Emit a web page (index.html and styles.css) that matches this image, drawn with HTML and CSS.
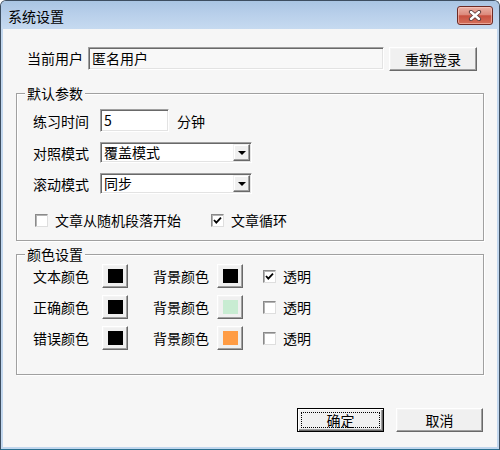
FILE: index.html
```html
<!DOCTYPE html>
<html lang="zh-CN">
<head>
<meta charset="utf-8">
<title>系统设置</title>
<link rel="stylesheet" href="styles.css">
</head>
<body>
<div class="window">
  <div class="titlebar">
    <span class="title">系统设置</span>
    <span class="close">
      <svg width="14" height="11" viewBox="0 0 14 11">
        <path d="M3 2 L11 9 M11 2 L3 9" stroke="#5a3a3a" stroke-width="4.2" stroke-linecap="round"/>
        <path d="M3 2 L11 9 M11 2 L3 9" stroke="#ffffff" stroke-width="2.4" stroke-linecap="round"/>
      </svg>
    </span>
  </div>
  <div class="client">
    <div class="user-row">
      <span class="user-label">当前用户</span>
      <div class="field field-user">匿名用户</div>
      <div class="btn btn-relogin">重新登录</div>
    </div>

    <div class="group group-params">
      <span class="legend">默认参数</span>
      <div class="prow prow-first">
        <span class="plabel">练习时间</span>
        <div class="field field-time">5</div>
        <span class="unit">分钟</span>
      </div>
      <div class="prow">
        <span class="plabel">对照模式</span>
        <div class="combo">
          <span class="combo-text">覆盖模式</span>
          <span class="combo-btn"><span class="tri"></span></span>
        </div>
      </div>
      <div class="prow">
        <span class="plabel">滚动模式</span>
        <div class="combo">
          <span class="combo-text">同步</span>
          <span class="combo-btn"><span class="tri"></span></span>
        </div>
      </div>
      <div class="checks">
        <label class="check check-wide"><span class="box"></span><span class="check-text">文章从随机段落开始</span></label>
        <label class="check"><span class="box"><svg width="11" height="11" viewBox="0 0 11 11"><polyline points="2,5 4.3,7.6 9,2.6" fill="none" stroke="#000" stroke-width="1.8"/></svg></span><span class="check-text">文章循环</span></label>
      </div>
    </div>

    <div class="group group-colors">
      <span class="legend">颜色设置</span>
      <div class="crow">
        <span class="clabel">文本颜色</span>
        <div class="btn cbtn"><span class="swatch swatch-black"></span></div>
        <span class="clabel2">背景颜色</span>
        <div class="btn cbtn"><span class="swatch swatch-black"></span></div>
        <label class="check ccheck"><span class="box"><svg width="11" height="11" viewBox="0 0 11 11"><polyline points="2,5 4.3,7.6 9,2.6" fill="none" stroke="#000" stroke-width="1.8"/></svg></span><span class="check-text">透明</span></label>
      </div>
      <div class="crow">
        <span class="clabel">正确颜色</span>
        <div class="btn cbtn"><span class="swatch swatch-black"></span></div>
        <span class="clabel2">背景颜色</span>
        <div class="btn cbtn"><span class="swatch swatch-green"></span></div>
        <label class="check ccheck"><span class="box"></span><span class="check-text">透明</span></label>
      </div>
      <div class="crow">
        <span class="clabel">错误颜色</span>
        <div class="btn cbtn"><span class="swatch swatch-black"></span></div>
        <span class="clabel2">背景颜色</span>
        <div class="btn cbtn"><span class="swatch swatch-orange"></span></div>
        <label class="check ccheck"><span class="box"></span><span class="check-text">透明</span></label>
      </div>
    </div>

    <div class="actions">
      <div class="btn btn-action btn-default"><span class="focus">确定</span></div>
      <div class="btn btn-action">取消</div>
    </div>
  </div>
</div>
</body>
</html>
```

FILE: styles.css
```css
* {
  box-sizing: border-box;
}

html, body {
  margin: 0;
  padding: 0;
  background: #ffffff;
}

body {
  font-family: "Noto Sans CJK SC", "Noto Sans", sans-serif;
  font-size: 14px;
  color: #000;
}

.window {
  width: 500px;
  height: 450px;
  border: 1px solid #3d4e60;
  border-bottom-color: #2a7090;
  border-radius: 6px 6px 0 0;
  background: #c2d7ee;
  display: flex;
  flex-direction: column;
  overflow: hidden;
}

.titlebar {
  height: 28px;
  flex: none;
  display: flex;
  justify-content: space-between;
  align-items: flex-start;
  padding: 0 6px 0 7px;
  background: linear-gradient(180deg, #a9c5e3 0%, #b8cfea 45%, #c6daf0 100%);
}

.title {
  margin-top: 6px;
  line-height: 18px;
  font-size: 14px;
  color: #000;
}

.close {
  margin-top: 5px;
  width: 36px;
  height: 19px;
  border: 1px solid #6d2a24;
  border-radius: 3px;
  background: linear-gradient(180deg, #eab1a6 0%, #dc8a7c 45%, #c8503f 52%, #d4705c 100%);
  box-shadow: inset 0 0 0 1px rgba(255, 210, 200, 0.55);
  display: flex;
  align-items: center;
  justify-content: center;
}

.close svg {
  display: block;
}

.client {
  flex: 1;
  margin: 0 2px 2px 2px;
  background: #f6f6f6;
  padding: 18px 13px 0 13px;
}

/* user row */
.user-row {
  display: flex;
  align-items: flex-start;
  height: 24px;
}

.user-label {
  width: 61px;
  margin-left: 11px;
  line-height: 23px;
}

.field {
  height: 23px;
  border: 1px solid;
  border-color: #a0a0a0 #ffffff #ffffff #a0a0a0;
  box-shadow: inset 1px 1px 0 #696969, inset -1px -1px 0 #e3e3e3;
  background: #ffffff;
  line-height: 21px;
  padding-left: 3px;
}

.field-user {
  width: 296px;
  background: #f8f8f8;
}

.btn {
  border: 1px solid;
  border-color: #ffffff #696969 #696969 #ffffff;
  box-shadow: inset -1px -1px 0 #a0a0a0, inset 1px 1px 0 #f4f4f4;
  background: #f0f0f0;
  display: flex;
  align-items: center;
  justify-content: center;
}

.btn-relogin {
  width: 88px;
  height: 24px;
  margin-left: 5px;
}

/* group boxes */
.group {
  position: relative;
  border: 1px solid #a0a0a0;
  box-shadow: inset 1px 1px 0 #ffffff, 1px 1px 0 #ffffff;
}

.legend {
  position: absolute;
  top: -9px;
  left: 8px;
  padding: 0 2px 0 2px;
  line-height: 16px;
  background: #f6f6f6;
}

.group-params {
  margin-top: 22px;
  height: 148px;
  padding: 15px 0 0 16px;
}

.prow {
  display: flex;
  align-items: center;
  margin-top: 10px;
  height: 21px;
}

.prow-first {
  margin-top: 0;
  height: 23px;
}

.plabel {
  width: 67px;
}

.field-time {
  width: 69px;
}

.unit {
  margin-left: 8px;
}

.combo {
  width: 152px;
  height: 21px;
  border: 1px solid;
  border-color: #a0a0a0 #ffffff #ffffff #a0a0a0;
  box-shadow: inset 1px 1px 0 #696969, inset -1px -1px 0 #e3e3e3;
  background: #ffffff;
  display: flex;
  align-items: center;
  padding: 1px;
}

.combo-text {
  flex: 1;
  padding-left: 2px;
  line-height: 17px;
}

.combo-btn {
  width: 17px;
  height: 17px;
  border: 1px solid;
  border-color: #f0f0f0 #696969 #696969 #f0f0f0;
  box-shadow: inset -1px -1px 0 #a0a0a0, inset 1px 1px 0 #ffffff;
  background: #f0f0f0;
  display: flex;
  align-items: center;
  justify-content: center;
}

.tri {
  width: 0;
  height: 0;
  border-left: 4px solid transparent;
  border-right: 4px solid transparent;
  border-top: 4px solid #000;
  margin-top: 1px;
}

.checks {
  display: flex;
  align-items: center;
  margin-top: 19px;
  margin-left: 2px;
  height: 14px;
}

.check {
  display: flex;
  align-items: center;
}

.check-wide {
  width: 176px;
}

.box {
  width: 13px;
  height: 13px;
  border: 1px solid;
  border-color: #8a8a8a #dedede #dedede #8a8a8a;
  box-shadow: inset 1px 1px 0 #b4b4b4;
  background: #ffffff;
  display: flex;
  align-items: center;
  justify-content: center;
  flex: none;
}

.box svg {
  display: block;
}

.check-text {
  margin-left: 7px;
}

/* colour group */
.group-colors {
  margin-top: 13px;
  height: 121px;
  padding: 9px 0 0 16px;
}

.crow {
  display: flex;
  align-items: center;
  height: 24px;
  margin-bottom: 7px;
}

.clabel {
  width: 69px;
}

.clabel2 {
  width: 64px;
  margin-left: 25px;
}

.cbtn {
  width: 26px;
  height: 24px;
}

.swatch {
  width: 15px;
  height: 14px;
  display: block;
}

.swatch-black {
  background: #000000;
}

.swatch-green {
  background: #c8ecd2;
}

.swatch-orange {
  background: #ff9c44;
}

.ccheck {
  margin-left: 20px;
}

/* bottom buttons */
.actions {
  display: flex;
  justify-content: flex-end;
  gap: 12px;
  margin-top: 33px;
  padding-right: 1px;
}

.btn-action {
  width: 87px;
  height: 24px;
}

.btn-default {
  border: 1px solid #000;
  box-shadow: inset 1px 1px 0 #ffffff, inset -1px -1px 0 #696969, inset -2px -2px 0 #a0a0a0;
  padding: 3px;
}

.focus {
  flex: 1;
  height: 100%;
  border: 1px dotted #000;
  display: flex;
  align-items: center;
  justify-content: center;
}
```
